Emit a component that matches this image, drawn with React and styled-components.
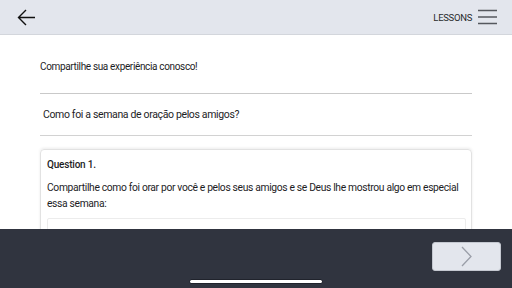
import styled, { createGlobalStyle } from "styled-components";

const Global = createGlobalStyle`
  html, body { margin: 0; padding: 0; background: #fff; }
  body { font-family: Roboto, "Liberation Sans", sans-serif; color: #1d1d1f; }
`;

const Screen = styled.div`
  width: 512px;
  height: 288px;
  display: flex;
  flex-direction: column;
  overflow: hidden;
`;

const Header = styled.header`
  height: 34px;
  flex-shrink: 0;
  background: #e3e6ed;
  border-bottom: 1px solid #d3d6dc;
  display: flex;
  align-items: center;
  justify-content: space-between;
  padding: 0 15px 0 17px;
`;

const IconButton = styled.div`
  display: flex;
  align-items: center;
  gap: 6px;
`;

const MenuLabel = styled.span`
  font-size: 9.5px;
  letter-spacing: -0.3px;
  color: #2a2a2c;
`;

const Content = styled.main`
  flex: 1;
  overflow: hidden;
  padding: 0 40px 0 40px;
`;

const Intro = styled.div`
  font-size: 10px;
  line-height: 16px;
  padding: 24px 0 18px;
  border-bottom: 1px solid #c9c9c9;
  letter-spacing: -0.35px;
`;

const Title = styled.div`
  font-size: 10.5px;
  line-height: 16px;
  padding: 13px 3px 12px;
  border-bottom: 1px solid #d2d2d2;
  letter-spacing: -0.35px;
`;

const Card = styled.section`
  margin-top: 13px;
  border: 1px solid #e2e2e2;
  border-radius: 4px;
  box-shadow: 0 -1px 3px rgba(0, 0, 0, 0.08);
  padding: 7px 5px 0 6px;
  height: 120px;
`;

const QuestionLabel = styled.div`
  font-size: 10px;
  font-weight: 500;
  line-height: 16px;
  letter-spacing: -0.2px;
`;

const QuestionText = styled.p`
  margin: 7px 0 0;
  font-size: 10.3px;
  line-height: 16px;
  letter-spacing: -0.34px;
`;

const AnswerBox = styled.div`
  margin-top: 6px;
  height: 60px;
  border: 1px solid #ececec;
  border-radius: 2px;
`;

const Footer = styled.footer`
  position: relative;
  height: 59px;
  flex-shrink: 0;
  background: #30343f;
  display: flex;
  justify-content: flex-end;
  padding: 13px 11px 0 0;
  box-sizing: border-box;
`;

const NextButton = styled.button`
  width: 69px;
  height: 29px;
  border: 1px solid #c4c8d0;
  border-radius: 3px;
  background: #e3e6ed;
  display: flex;
  align-items: center;
  justify-content: center;
  padding: 0;
`;

const HomeBar = styled.div`
  position: absolute;
  left: 190px;
  bottom: 5px;
  width: 132px;
  height: 3px;
  border-radius: 2px;
  background: #fff;
  box-shadow: 0 0 0 0.5px #10131a;
`;

function BackArrow() {
  return (
    <svg width="19" height="17" viewBox="0 0 19 17" fill="none">
      <path d="M18 8.5H1.5M9 1L1.5 8.5L9 16" stroke="#111" strokeWidth="1.4" />
    </svg>
  );
}

function Hamburger() {
  return (
    <svg width="19" height="16" viewBox="0 0 19 16">
      <path d="M0 1.5H19M0 8H19M0 14.5H19" stroke="#55585e" strokeWidth="1.5" />
    </svg>
  );
}

function Chevron() {
  return (
    <svg width="11" height="21" viewBox="0 0 11 21" fill="none">
      <path d="M1 1L10 10.5L1 20" stroke="#9a9ea8" strokeWidth="1.3" />
    </svg>
  );
}

export default function App() {
  return (
    <Screen>
      <Global />
      <Header>
        <IconButton>
          <BackArrow />
        </IconButton>
        <IconButton>
          <MenuLabel>LESSONS</MenuLabel>
          <Hamburger />
        </IconButton>
      </Header>
      <Content>
        <Intro>Compartilhe sua experiência conosco!</Intro>
        <Title>Como foi a semana de oração pelos amigos?</Title>
        <Card>
          <QuestionLabel>Question 1.</QuestionLabel>
          <QuestionText>
            Compartilhe como foi orar por você e pelos seus amigos e se Deus lhe mostrou algo em especial
            essa semana:
          </QuestionText>
          <AnswerBox />
        </Card>
      </Content>
      <Footer>
        <NextButton>
          <Chevron />
        </NextButton>
        <HomeBar />
      </Footer>
    </Screen>
  );
}
